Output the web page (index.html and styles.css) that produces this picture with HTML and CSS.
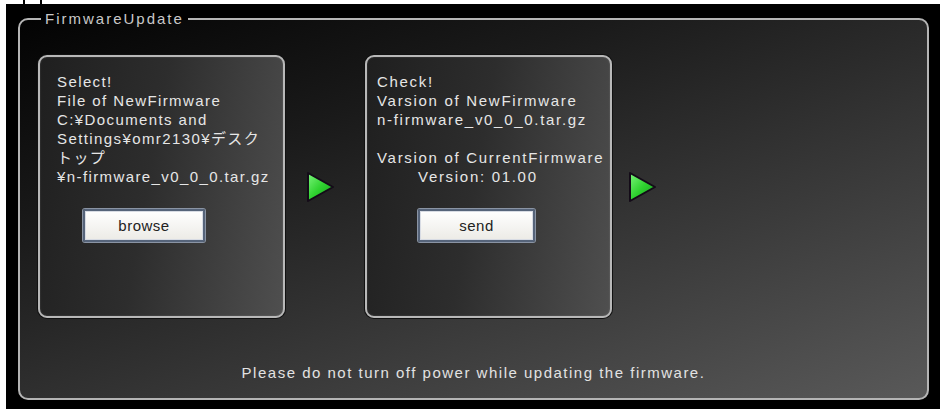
FILE: index.html
```html
<!DOCTYPE html>
<html lang="ja">
  <head>
    <meta charset="UTF-8" />
    <title>FirmwareUpdate</title>
    <link rel="stylesheet" href="styles.css">
  </head>
  <body>
    <div class="ticks">
      <span class="tick"></span>
      <span class="tick"></span>
    </div>

    <div class="screen">
      <fieldset class="panel">
        <legend>FirmwareUpdate</legend>

        <div class="steps">
          <div class="card">
            <p class="card-text">
              Select!<br>
              File of NewFirmware<br>
              C:¥Documents and<br>
              Settings¥omr2130¥デスク<br>
              トップ<br>
              ¥n-firmware_v0_0_0.tar.gz
            </p>
            <button class="btn btn-browse">browse</button>
          </div>

          <svg class="arrow arrow-first" width="30" height="32" viewBox="0 0 30 32">
            <defs>
              <linearGradient id="g1" x1="0" y1="0" x2="1" y2="1">
                <stop offset="0" stop-color="#7cf57c" />
                <stop offset="0.5" stop-color="#2fd22f" />
                <stop offset="1" stop-color="#159a1f" />
              </linearGradient>
            </defs>
            <polygon points="3,2 28,16 3,30" fill="url(#g1)" stroke="#140b18" stroke-width="2" stroke-linejoin="round" />
          </svg>

          <div class="card card-check">
            <p class="card-text">
              Check!<br>
              Varsion of NewFirmware<br>
              n-firmware_v0_0_0.tar.gz<br>
              <br>
              Varsion of CurrentFirmware<br>
              <span class="indent">Version: 01.00</span>
            </p>
            <button class="btn btn-send">send</button>
          </div>

          <svg class="arrow arrow-last" width="30" height="32" viewBox="0 0 30 32">
            <defs>
              <linearGradient id="g2" x1="0" y1="0" x2="1" y2="1">
                <stop offset="0" stop-color="#7cf57c" />
                <stop offset="0.5" stop-color="#2fd22f" />
                <stop offset="1" stop-color="#159a1f" />
              </linearGradient>
            </defs>
            <polygon points="3,2 28,16 3,30" fill="url(#g2)" stroke="#140b18" stroke-width="2" stroke-linejoin="round" />
          </svg>
        </div>

        <p class="notice">Please do not turn off power while updating the firmware.</p>
      </fieldset>
    </div>
  </body>
</html>
```

FILE: styles.css
```css
body {
  margin: 0;
  background-color: #fff;
  font-family: "Liberation Sans", "Noto Sans CJK JP", sans-serif;
}

.ticks {
  display: flex;
  height: 4px;
  padding-left: 23px;
}

.tick {
  width: 2px;
  height: 4px;
  background-color: #000;
  margin-right: 15px;
}

.screen {
  margin-left: 6px;
  height: 405px;
  padding: 7px 0 0 12px;
  box-sizing: border-box;
  background-color: #000;
}

.panel {
  width: 911px;
  min-width: 0;
  margin: 0;
  padding: 0;
  box-sizing: border-box;
  border: 2px solid #b4b4b4;
  border-radius: 10px;
  background: linear-gradient(160deg, #030303 0%, #1a1a1a 30%, #353535 60%, #595959 100%);
}

.panel legend {
  margin-left: 21px;
  padding: 0 4px;
  font-size: 15px;
  line-height: 16px;
  letter-spacing: 2px;
  color: #c8c8c8;
}

.steps {
  display: flex;
  align-items: center;
  margin-top: 28px;
  padding-left: 18px;
}

.card {
  width: 247px;
  height: 263px;
  box-sizing: border-box;
  padding: 15px 17px;
  border: 2px solid #b8b8b8;
  border-radius: 9px;
  background: linear-gradient(100deg, #1f1f1f 0%, #2d2d2d 45%, #4f4f4f 100%);
  box-shadow: 0 0 0 1px #111, inset 0 0 2px rgba(255, 255, 255, 0.2);
}

.card-check {
  padding-left: 10px;
}

.card-text {
  margin: 0;
  font-size: 15px;
  line-height: 19px;
  letter-spacing: 1.4px;
  color: #e6e6e6;
  white-space: nowrap;
}

.card-check .card-text {
  letter-spacing: 1.7px;
}

.indent {
  padding-left: 41px;
}

.btn {
  display: block;
  height: 33px;
  margin-top: 23px;
  padding: 0;
  font-family: "Liberation Sans", sans-serif;
  font-size: 15px;
  letter-spacing: 0.5px;
  color: #222;
  background: linear-gradient(#ffffff, #ecebe6);
  border: 2px solid #56647a;
  border-radius: 2px;
  box-shadow: 0 0 0 1px #8a94a4, inset 0 0 0 1px #d8dce4;
}

.btn-browse {
  width: 122px;
  margin-left: 26px;
}

.btn-send {
  width: 117px;
  margin-left: 41px;
}

.arrow-first {
  margin: 0 30px 0 20px;
}

.arrow-last {
  margin-left: 15px;
}

.notice {
  margin: 45px 0 16px;
  text-align: center;
  font-size: 15px;
  line-height: 19px;
  letter-spacing: 1.5px;
  color: #e2e2e2;
}
```
